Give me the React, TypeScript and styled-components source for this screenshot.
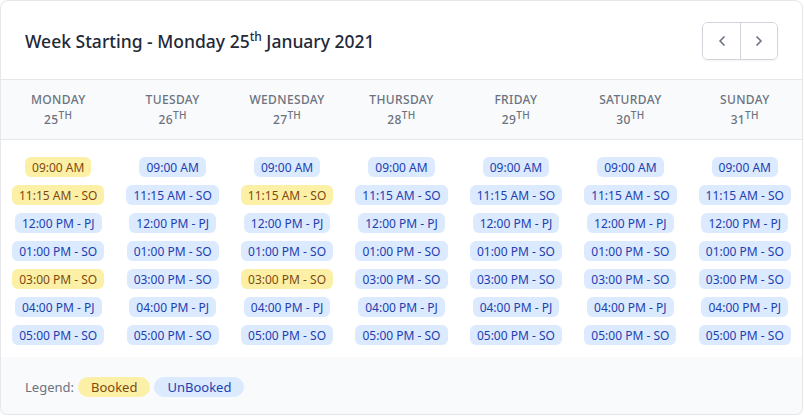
import React from "react";
import styled, { createGlobalStyle } from "styled-components";
import { ChevronLeft, ChevronRight } from "lucide-react";

type Slot = { time: string; tag?: string };

const DAYS = [
  { name: "Monday", date: 25 },
  { name: "Tuesday", date: 26 },
  { name: "Wednesday", date: 27 },
  { name: "Thursday", date: 28 },
  { name: "Friday", date: 29 },
  { name: "Saturday", date: 30 },
  { name: "Sunday", date: 31 }
];

const BASE_SLOTS: Slot[] = [
  { time: "09:00 AM" },
  { time: "11:15 AM", tag: "SO" },
  { time: "12:00 PM", tag: "PJ" },
  { time: "01:00 PM", tag: "SO" },
  { time: "03:00 PM", tag: "SO" },
  { time: "04:00 PM", tag: "PJ" },
  { time: "05:00 PM", tag: "SO" }
];

// which slot indexes are booked, per day
const BOOKED: Record<number, number[]> = {
  0: [0, 1, 4],
  2: [1, 4]
};

const App = () => {
  return (
    <>
      <GlobalStyle />
      <Card>
        <Header>
          <Title>
            Week Starting - Monday 25<sup>th</sup> January 2021
          </Title>
          <NavGroup>
            <NavButton aria-label="Previous week">
              <ChevronLeft size={16} strokeWidth={2.6} />
            </NavButton>
            <NavButton aria-label="Next week">
              <ChevronRight size={16} strokeWidth={2.6} />
            </NavButton>
          </NavGroup>
        </Header>

        <DayRow>
          {DAYS.map((d) => (
            <DayHead key={d.name}>
              <DayName>{d.name}</DayName>
              <DayDate>
                {d.date}
                <sup>th</sup>
              </DayDate>
            </DayHead>
          ))}
        </DayRow>

        <SlotGrid>
          {DAYS.map((d, di) => (
            <SlotColumn key={d.name}>
              {BASE_SLOTS.map((s, si) => (
                <Pill key={s.time} $booked={(BOOKED[di] || []).includes(si)}>
                  {s.tag ? `${s.time} - ${s.tag}` : s.time}
                </Pill>
              ))}
            </SlotColumn>
          ))}
        </SlotGrid>

        <Footer>
          <LegendLabel>Legend:</LegendLabel>
          <LegendPill $booked>Booked</LegendPill>
          <LegendPill>UnBooked</LegendPill>
        </Footer>
      </Card>
    </>
  );
};

export default App;

const YELLOW_BG = "#fcf0a6";
const YELLOW_FG = "#7c4a10";
const BLUE_BG = "#dbeafe";
const BLUE_FG = "#1e40af";

const GlobalStyle = createGlobalStyle`
  * { box-sizing: border-box; }
  body {
    margin: 0;
    background: #ffffff;
    font-family: "Noto Sans", "Open Sans", sans-serif;
  }
`;

const Card = styled.div`
  width: 803px;
  height: 415px;
  display: flex;
  flex-direction: column;
  border: 1px solid #e5e7eb;
  border-radius: 8px;
  overflow: hidden;
  background: #ffffff;
  box-shadow: 0 1px 2px rgba(0, 0, 0, 0.06);
`;

const Header = styled.div`
  height: 78px;
  display: flex;
  align-items: center;
  justify-content: space-between;
  padding: 0 24px 0 24px;
`;

const Title = styled.h1`
  margin: 0;
  margin-top: 2px;
  font-size: 17.5px;
  font-weight: 500;
  color: #1f2937;
  & > sup {
    font-size: 12px;
    line-height: 0;
    vertical-align: 0.6em;
  }
`;

const NavGroup = styled.div`
  display: flex;
  margin-top: 2px;
  border: 1px solid #d1d5db;
  border-radius: 6px;
  overflow: hidden;
  box-shadow: 0 1px 2px rgba(0, 0, 0, 0.05);
`;

const NavButton = styled.button`
  width: 37px;
  height: 36px;
  display: flex;
  align-items: center;
  justify-content: center;
  padding: 0;
  border: none;
  background: #ffffff;
  color: #6b7280;
  cursor: pointer;
  & + & {
    border-left: 1px solid #d1d5db;
  }
`;

const DayRow = styled.div`
  display: grid;
  grid-template-columns: repeat(7, 1fr);
  height: 62px;
  background: #f9fafb;
  border-top: 1px solid #e5e7eb;
  border-bottom: 1px solid #e5e7eb;
`;

const DayHead = styled.div`
  display: flex;
  flex-direction: column;
  align-items: center;
  justify-content: center;
  padding-top: 2px;
  color: #6b7280;
  font-size: 12px;
  font-weight: 500;
  text-transform: uppercase;
  letter-spacing: 0.03em;
`;

const DayName = styled.div`
  line-height: 16px;
`;

const DayDate = styled.div`
  line-height: 16px;
  margin-top: 4px;
  & > sup {
    font-size: 10px;
    line-height: 0;
    vertical-align: 0.5em;
  }
`;

const SlotGrid = styled.div`
  flex: 1;
  display: grid;
  grid-template-columns: repeat(7, 1fr);
  padding: 17px 0 12px;
`;

const SlotColumn = styled.div`
  display: flex;
  flex-direction: column;
  align-items: center;
  gap: 8px;
`;

const Pill = styled.span<{ $booked?: boolean }>`
  height: 20px;
  display: inline-flex;
  align-items: center;
  padding: 0 7px;
  border-radius: 6px;
  font-size: 12px;
  white-space: nowrap;
  background: ${({ $booked }) => ($booked ? YELLOW_BG : BLUE_BG)};
  color: ${({ $booked }) => ($booked ? YELLOW_FG : BLUE_FG)};
`;

const Footer = styled.div`
  height: 57px;
  display: flex;
  align-items: center;
  gap: 4px;
  padding: 3px 24px 0;
  background: #f9fafb;
`;

const LegendLabel = styled.span`
  font-size: 13px;
  color: #6b7280;
`;

const LegendPill = styled.span<{ $booked?: boolean }>`
  height: 20px;
  display: inline-flex;
  align-items: center;
  padding: 0 13px;
  border-radius: 999px;
  font-size: 13px;
  background: ${({ $booked }) => ($booked ? YELLOW_BG : BLUE_BG)};
  color: ${({ $booked }) => ($booked ? YELLOW_FG : BLUE_FG)};
`;
